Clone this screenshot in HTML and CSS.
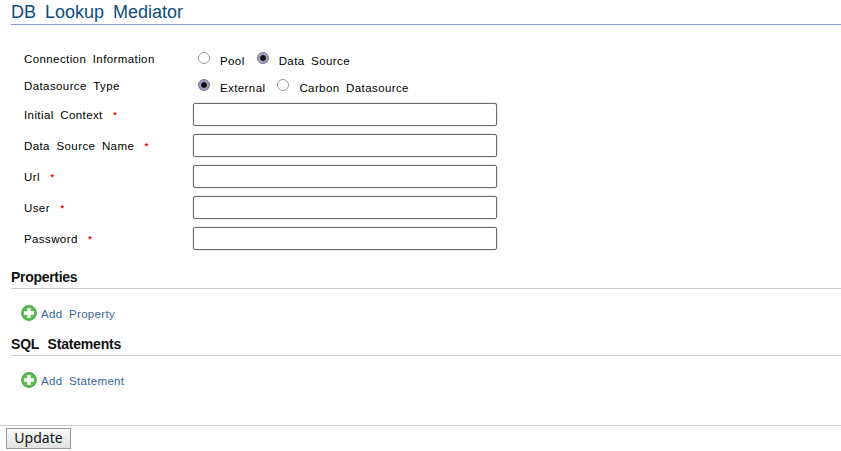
FILE: index.html
```html
<!DOCTYPE html>
<html lang="en">
<head>
<meta charset="utf-8">
<title>DB Lookup Mediator</title>
<link rel="stylesheet" href="styles.css">
</head>
<body>
<form class="page">
  <h1>DB Lookup Mediator</h1>
  <div class="fields">
    <div class="row choices">
      <span class="label">Connection Information</span>
      <label class="choice"><input type="radio" name="conn"><span>Pool</span></label>
      <label class="choice"><input type="radio" name="conn" checked><span>Data Source</span></label>
    </div>
    <div class="row choices">
      <span class="label">Datasource Type</span>
      <label class="choice"><input type="radio" name="type" checked><span>External</span></label>
      <label class="choice"><input type="radio" name="type"><span>Carbon Datasource</span></label>
    </div>
    <div class="row"><label class="label" for="ctx">Initial Context <b class="req">*</b></label><input class="text" id="ctx" type="text"></div>
    <div class="row"><label class="label" for="dsn">Data Source Name <b class="req">*</b></label><input class="text" id="dsn" type="text"></div>
    <div class="row"><label class="label" for="url">Url <b class="req">*</b></label><input class="text" id="url" type="text"></div>
    <div class="row"><label class="label" for="user">User <b class="req">*</b></label><input class="text" id="user" type="text"></div>
    <div class="row"><label class="label" for="pass">Password <b class="req">*</b></label><input class="text" id="pass" type="password"></div>
  </div>
  <h2>Properties</h2>
  <a class="add"><svg width="16" height="16" viewBox="0 0 16 16"><circle cx="8" cy="8" r="7.9" fill="#48ad43"/><circle cx="8" cy="8" r="6.8" fill="#5dbb55"/><path d="M8 3v10M3 8h10" stroke="#fff" stroke-width="3.4"/></svg><span>Add Property</span></a>
  <h2 class="second">SQL Statements</h2>
  <a class="add"><svg width="16" height="16" viewBox="0 0 16 16"><circle cx="8" cy="8" r="7.9" fill="#48ad43"/><circle cx="8" cy="8" r="6.8" fill="#5dbb55"/><path d="M8 3v10M3 8h10" stroke="#fff" stroke-width="3.4"/></svg><span>Add Statement</span></a>
  <div class="actions"><button type="button">Update</button></div>
</form>
</body>
</html>
```

FILE: styles.css
```css
* { box-sizing: border-box; }
body {
  margin: 0;
  background: #fff;
  color: #000;
  font: 11.5px/16px "Liberation Sans", Arial, sans-serif;
  letter-spacing: .4px;
  word-spacing: 3px;
  overflow: hidden;
}
.page { margin: 0; }
h1 {
  margin: 0 0 0 11px;
  height: 25px;
  border-bottom: 1px solid #8c9fcd;
  color: #0d4d7f;
  font-size: 18px;
  font-weight: 400;
  line-height: 24px;
  letter-spacing: 0;
  word-spacing: 4px;
}
.fields { padding: 20px 0 0 24px; }
.row { display: flex; align-items: center; height: 31px; }
.choices { height: 27px; }
.label { width: 169px; padding-top: 1px; white-space: nowrap; }
.req { color: #f00; font-size: 9px; line-height: 10px; font-weight: 700; margin-left: 4px; vertical-align: 1px; }
.choice { display: flex; align-items: center; margin-right: 7px; }
.choice input {
  appearance: none;
  width: 12px;
  height: 12px;
  margin: 0 10px 2px 5px;
  border: 1px solid #999;
  border-radius: 50%;
  background: #fff;
}
.choice input:checked {
  border-color: #777790;
  background: radial-gradient(circle, #111 0 2.4px, #a0a0bd 3.4px);
}
.choice span { padding-top: 5px; }
.text {
  width: 304px;
  height: 23px;
  margin: 0;
  border: 1px solid #6b6b6b;
  border-radius: 2px;
  background: #fff;
  box-shadow: 0 0 0 1px #ececec;
}
h2 {
  margin: 14px 0 0 11px;
  height: 21px;
  border-bottom: 1px solid #ccc;
  color: #111;
  font-size: 14px;
  font-weight: 700;
  line-height: 18px;
  letter-spacing: -.3px;
  word-spacing: 5px;
}
.second { margin-top: 14px; letter-spacing: -.2px; }
.add { display: flex; align-items: center; height: 16px; margin: 16px 0 0 21px; gap: 4px; color: #386698; letter-spacing: .33px; }
.add span { padding-top: 2px; }
.actions { margin-top: 37px; border-top: 1px solid #ccc; padding: 2px 0 0 6px; }
button {
  display: block;
  width: 65px;
  height: 21px;
  padding: 0 0 2px;
  border: 1px solid #999;
  background: linear-gradient(#fafafa, #e2e2e2);
  color: #111;
  font: 14px/17px "Noto Sans", "Open Sans", sans-serif;
}
```
